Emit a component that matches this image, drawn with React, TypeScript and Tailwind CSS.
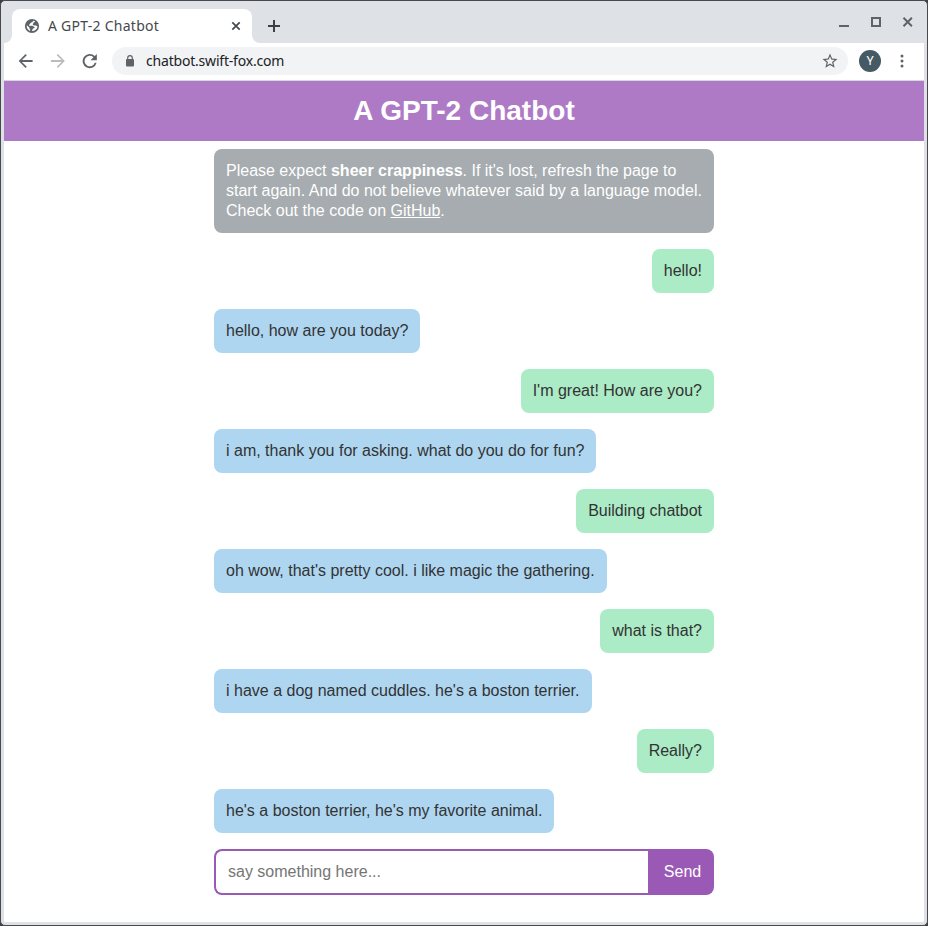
import React from "react";

type Message = { from: "me" | "bot"; text: string };

const messages: Message[] = [
  { from: "me", text: "hello!" },
  { from: "bot", text: "hello, how are you today?" },
  { from: "me", text: "I'm great! How are you?" },
  { from: "bot", text: "i am, thank you for asking. what do you do for fun?" },
  { from: "me", text: "Building chatbot" },
  { from: "bot", text: "oh wow, that's pretty cool. i like magic the gathering." },
  { from: "me", text: "what is that?" },
  { from: "bot", text: "i have a dog named cuddles. he's a boston terrier." },
  { from: "me", text: "Really?" },
  { from: "bot", text: "he's a boston terrier, he's my favorite animal." },
];

function TabStrip() {
  return (
    <div className="flex h-[42px] items-end bg-[#dee1e6]">
      <div className="flex h-[34px] w-2 items-end bg-white">
        <div className="h-full w-full rounded-br-lg bg-[#dee1e6]" />
      </div>
      <div className="flex h-[34px] w-60 items-center rounded-t-lg bg-white pl-3 pr-[11px]">
        <svg className="size-4 shrink-0" viewBox="0 0 16 16">
          <circle cx="8" cy="8" r="7.1" fill="#5f6368" />
          <path
            d="M9.200 2.700C8.900 4 7.600 4.500 6.600 4.900c-.5.300-.3 1.300-1 1.500l-.6.200v1.100h3.300c.9 0 1 .9 1.700 1.100.7.200.8.900.2 1.400-.6.400-1.400.2-1.600 1-.1.800-.6 1-.7 1.900 3 0 5.500-2.100 5.600-4.900-.7 0-.8-.8-1.400-.8H10c-.7 0-1.200-.5-1.200-1.200s.7-.7.700-1.400c.1-.8 1.200-.5 1.600-1.300-.5-.4-1.100-.7-1.900-.8ZM2.700 7.200c-.3 2.500 1.100 4.900 3.400 5.700V11.600c0-.6-.8-.8-.8-1.500v-.5Z"
            fill="#fff"
          />
        </svg>
        <span className="ml-2 flex-1 whitespace-nowrap font-['Noto_Sans',sans-serif] text-[14px] leading-5 tracking-[0.26px] text-[#45494d]">
          A GPT-2 Chatbot
        </span>
        <svg className="size-[10px] shrink-0" viewBox="0 0 10 10">
          <path d="m1.300 1.300 7.400 7.400m0-7.400-7.400 7.400" stroke="#45494d" strokeWidth="1.700" />
        </svg>
      </div>
      <div className="h-[34px] w-2 bg-white">
        <div className="h-full w-full rounded-bl-lg bg-[#dee1e6]" />
      </div>
      <div className="flex h-[34px] flex-1 items-center pl-2">
        <svg className="size-3" viewBox="0 0 12 12">
          <path d="M6 0v12M0 6h12" stroke="#3c4043" strokeWidth="2" />
        </svg>
      </div>
      <svg className="mb-[11px] mr-[9px] h-5 w-[78px]" viewBox="0 0 78 20">
        <path d="M2 14h10" stroke="#5f6368" strokeWidth="2" />
        <rect x="35" y="6" width="8" height="8" fill="none" stroke="#5f6368" strokeWidth="2" />
        <path d="m66.500 5.800 8.400 8.400m0-8.400-8.400 8.400" stroke="#5f6368" strokeWidth="2" />
      </svg>
    </div>
  );
}

function Toolbar() {
  return (
    <div className="flex h-[38px] items-center border-b border-[#d5d8d8] bg-white pb-px pl-3 pr-5">
      <svg className="size-5" viewBox="-0.100 -0.400 24.800 24.800" fill="#5f6368">
        <path d="M20.500 10.800H7.300l6-6L11.800 3.400 3.200 12l8.600 8.600 1.500-1.500-6-6h13.200z" />
      </svg>
      <svg className="ml-3 size-5" viewBox="-0.100 -0.400 24.800 24.800" fill="#babcbe">
        <path d="M3.500 10.800h13.200l-6-6 1.500-1.400 8.600 8.600-8.600 8.600-1.500-1.500 6-6H3.500z" />
      </svg>
      <svg className="ml-3 size-5" viewBox="-0.100 -0.400 24.800 24.800" fill="#5f6368">
        <path d="M18.200 5.800A8.800 8.800 0 1 0 20.500 14.200h-2.300A6.500 6.500 0 1 1 16.600 7.400L13 11h7.800V3.200z" />
      </svg>
      <div className="ml-3 flex h-7 flex-1 items-center rounded-full bg-[#f1f3f4] pl-[13px] pr-[9px]">
        <svg className="h-3 w-[10px]" viewBox="0 0 10 12">
          <rect x="1" y="4" width="8" height="7.500" rx="1" fill="#5f6368" />
          <path d="M2.700 5V3a2.300 2.300 0 0 1 4.600 0v2" fill="none" stroke="#5f6368" strokeWidth="1.200" />
        </svg>
        <span className="ml-[11px] flex-1 font-['Noto_Sans',sans-serif] text-[14px] leading-5 tracking-[-0.2px] text-[#202124]">
          chatbot.swift-fox.com
        </span>
        <svg className="size-[18px]" viewBox="0 0 24 24" fill="#5f6368">
          <path d="m22 9.240-7.190-.62L12 2 9.190 8.630 2 9.240l5.460 4.730L5.820 21 12 17.270 18.180 21l-1.630-7.030zM12 15.400l-3.760 2.270 1-4.280-3.320-2.880 4.380-.38L12 6.100l1.710 4.040 4.380.38-3.320 2.880 1 4.280z" />
        </svg>
      </div>
      <div className="ml-[11px] flex size-[22px] items-center justify-center rounded-full bg-[#455a64] font-['Roboto',sans-serif] text-[12px] text-white">
        Y
      </div>
      <svg className="ml-[19px] h-4 w-1" viewBox="0 0 4 16" fill="#5f6368">
        <circle cx="2" cy="3" r="1.500" />
        <circle cx="2" cy="8" r="1.500" />
        <circle cx="2" cy="13" r="1.500" />
      </svg>
    </div>
  );
}

function Bubble({ message }: { message: Message }) {
  const look = message.from === "me" ? "self-end bg-[#abebc6]" : "self-start bg-[#aed6f1]";
  return <div className={`rounded-lg p-3 leading-5 text-[#333] ${look}`}>{message.text}</div>;
}

export default function App() {
  return (
    <div className="h-[926px] w-[928px] bg-[#3f3d41]">
      <div className="flex h-full flex-col overflow-hidden rounded-[5px] border border-[#4a484c] bg-[#dee1e6] px-[3px] pb-[3px] font-['Liberation_Sans',Arial,sans-serif] text-base">
        <TabStrip />
        <Toolbar />
        <h1 className="flex h-[60px] items-center justify-center bg-[#af7ac5] text-[28px] font-bold leading-8 text-white">
          A GPT-2 Chatbot
        </h1>
        <main className="flex flex-1 flex-col items-center bg-white pt-2">
          <div className="flex w-[500px] flex-col gap-4">
            <div className="rounded-lg bg-[#a6acaf] p-3 leading-5 text-white">
              Please expect <b>sheer crappiness</b>. If it's lost, refresh the page to start again. And do not
              believe whatever said by a language model. Check out the code on{" "}
              <a className="underline">GitHub</a>.
            </div>
            {messages.map((message) => (
              <Bubble key={message.text} message={message} />
            ))}
            <form className="flex h-[46px]" onSubmit={(event) => event.preventDefault()}>
              <input
                className="min-w-0 flex-1 rounded-l-lg border-2 border-r-0 border-[#9b59b6] bg-white px-3 outline-none placeholder:text-[#757575]"
                placeholder="say something here..."
              />
              <button className="w-[66px] rounded-r-lg bg-[#9b59b6] pl-[3px] text-white">Send</button>
            </form>
          </div>
        </main>
      </div>
    </div>
  );
}
